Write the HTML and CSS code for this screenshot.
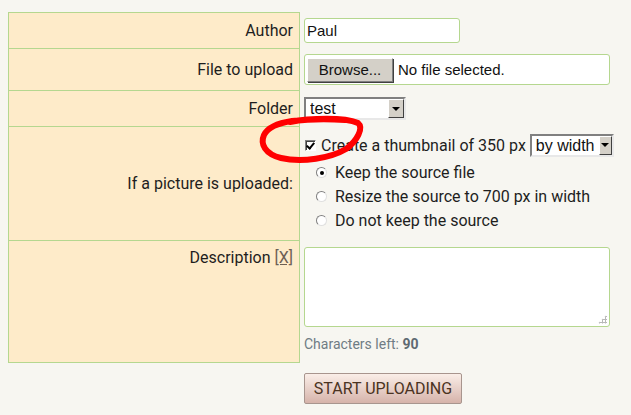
FILE: index.html
```html
<!DOCTYPE html>
<html lang="en">
<head>
    <meta charset="UTF-8">
    <title>Upload</title>
    <link rel="stylesheet" href="styles.css">
</head>
<body>
    <form class="upload">
        <table class="fields">
            <tr class="row-author">
                <th>Author</th>
                <td><input class="text" type="text" value="Paul"></td>
            </tr>
            <tr class="row-file">
                <th>File to upload</th>
                <td>
                    <div class="file">
                        <button type="button" class="browse">Browse...</button>
                        <span>No file selected.</span>
                    </div>
                </td>
            </tr>
            <tr class="row-folder">
                <th>Folder</th>
                <td>
                    <span class="select folder">
                        <select><option>test</option></select>
                        <span class="arrow"></span>
                    </span>
                </td>
            </tr>
            <tr class="row-picture">
                <th>If a picture is uploaded:</th>
                <td class="top">
                    <div class="thumb">
                        <span class="check on"></span>
                        <span class="thumb-text">Create a thumbnail of 350 px</span>
                        <span class="select mode">
                            <select><option>by width</option></select>
                            <span class="arrow"></span>
                        </span>
                    </div>
                    <div class="opt"><span class="radio on"></span>Keep the source file</div>
                    <div class="opt"><span class="radio"></span>Resize the source to 700 px in width</div>
                    <div class="opt"><span class="radio"></span>Do not keep the source</div>
                </td>
            </tr>
            <tr class="row-desc">
                <th class="top">Description <a href="#">[X]</a></th>
                <td class="top">
                    <div class="area"><span class="grip"></span></div>
                    <p class="left">Characters left: <b>90</b></p>
                </td>
            </tr>
        </table>
        <div class="actions">
            <button type="button" class="start">START UPLOADING</button>
        </div>
    </form>

    <!-- hand drawn mark around the checkbox -->
    <svg class="scribble" width="631" height="415" viewBox="0 0 631 415">
        <path d="M290 122 C 310 118, 345 117, 358 123 C 364 128, 357 141, 346 149 C 331 158, 302 163, 281 158 C 265 154, 260 144, 264 135 C 268 127, 278 123, 292 121 C 310 119, 330 119, 345 120"
              fill="none" stroke="#ff0000" stroke-width="6" stroke-linecap="round"/>
    </svg>
</body>
</html>
```

FILE: styles.css
```css
*{
    box-sizing: border-box;
}

body{
    margin: 0;
    background-color: #f7f6f1;
    font-family: Roboto, "Noto Sans", sans-serif;
    font-size: 16px;
    color: #1e1e1e;
    position: relative;
}

.upload{
    padding: 12px 0 0 8px;
}

.fields{
    border-collapse: collapse;
}

.fields th{
    width: 291px;
    background-color: #feebc9;
    border: 1px solid #b5d78f;
    font-weight: normal;
    text-align: right;
    padding: 0 6px;
}

.fields td{
    padding: 0 0 0 4px;
    vertical-align: middle;
}

.fields .top{
    vertical-align: top;
}

.row-author{ height: 36px; }
.row-file{ height: 42px; }
.row-folder{ height: 36px; }
.row-picture{ height: 114px; }
.row-desc{ height: 122px; }

.row-desc th{
    padding-top: 7px;
}

.fields a{
    color: #6e6054;
}

.text{
    width: 156px;
    height: 25px;
    border: 1px solid #b5d78f;
    border-radius: 3px;
    background: #fff;
    font-family: "Liberation Sans", Arial, sans-serif;
    font-size: 15px;
    padding: 0 2px;
    color: #111;
    display: block;
}

.file{
    width: 306px;
    height: 31px;
    border: 1px solid #b5d78f;
    border-radius: 3px;
    background: #fff;
    display: flex;
    align-items: center;
    padding-left: 2px;
    font-family: "Liberation Sans", Arial, sans-serif;
    font-size: 15px;
    color: #111;
}

.browse{
    width: 86px;
    height: 24px;
    background: #d4d0c8;
    border: 1px solid;
    border-color: #fff #808080 #808080 #fff;
    box-shadow: 1px 1px 0 #404040;
    font-family: "Liberation Sans", Arial, sans-serif;
    font-size: 15px;
    color: #111;
    padding: 0;
    margin-right: 5px;
}

.select{
    display: inline-flex;
    height: 23px;
    border: 2px solid;
    border-color: #808080 #e8e8e8 #e8e8e8 #808080;
    background: #fff;
    vertical-align: middle;
}

.select select{
    appearance: none;
    -webkit-appearance: none;
    border: none;
    background: #fff;
    font-family: "Liberation Sans", Arial, sans-serif;
    font-size: 16px;
    color: #111;
    padding: 0 4px;
    flex: 1;
    outline: none;
}

.folder{ width: 102px; }
.mode{ width: 84px; }

.select .arrow{
    width: 16px;
    background: #d4d0c8;
    border: 1px solid;
    border-color: #fff #404040 #404040 #fff;
    display: flex;
    align-items: center;
    justify-content: center;
}

.select .arrow::after{
    content: "";
    border-left: 4px solid transparent;
    border-right: 4px solid transparent;
    border-top: 4px solid #000;
}

.thumb{
    display: flex;
    align-items: center;
    height: 23px;
    margin: 7px 0 4px;
}

.check{
    width: 11px;
    height: 11px;
    border: 1px solid;
    border-color: #808080 #fff #fff #808080;
    box-shadow: inset 1px 1px 0 #404040;
    background: #fff;
    position: relative;
    margin: 0 5px 0 1px;
}

.check.on::after{
    content: "";
    position: absolute;
    left: 2px;
    top: 0px;
    width: 3px;
    height: 6px;
    border-right: 2px solid #000;
    border-bottom: 2px solid #000;
    transform: rotate(40deg);
}

.thumb-text{
    margin-right: 4px;
}

.opt{
    height: 24px;
    display: flex;
    align-items: center;
    padding-left: 12px;
}

.radio{
    width: 11px;
    height: 11px;
    border-radius: 50%;
    background: #fff;
    border: 1px solid;
    border-color: #808080 #e0e0e0 #e0e0e0 #808080;
    margin-right: 8px;
    display: flex;
    align-items: center;
    justify-content: center;
}

.radio.on::after{
    content: "";
    width: 4px;
    height: 4px;
    border-radius: 50%;
    background: #000;
}

.area{
    width: 306px;
    height: 80px;
    margin-top: 6px;
    border: 1px solid #b5d78f;
    border-radius: 3px;
    background: #fff;
    position: relative;
}

.grip{
    position: absolute;
    right: 2px;
    bottom: 2px;
    width: 9px;
    height: 9px;
    background:
        radial-gradient(circle, #b8b8b8 1px, transparent 1.2px) 0 0 / 3px 3px;
    clip-path: polygon(100% 0, 100% 100%, 0 100%);
}

.left{
    margin: 9px 0 0;
    font-size: 14px;
    color: #6f7c84;
}

.left b{
    color: #5e6a72;
}

.actions{
    padding: 10px 0 0 296px;
}

.start{
    width: 158px;
    height: 31px;
    border: 1px solid #a8958e;
    border-radius: 2px;
    background: linear-gradient(#faeee8, #d6b3aa);
    font-family: Roboto, sans-serif;
    font-size: 16px;
    color: #4b3322;
    padding: 0;
}

.scribble{
    position: absolute;
    left: 0;
    top: 0;
    pointer-events: none;
}
```
